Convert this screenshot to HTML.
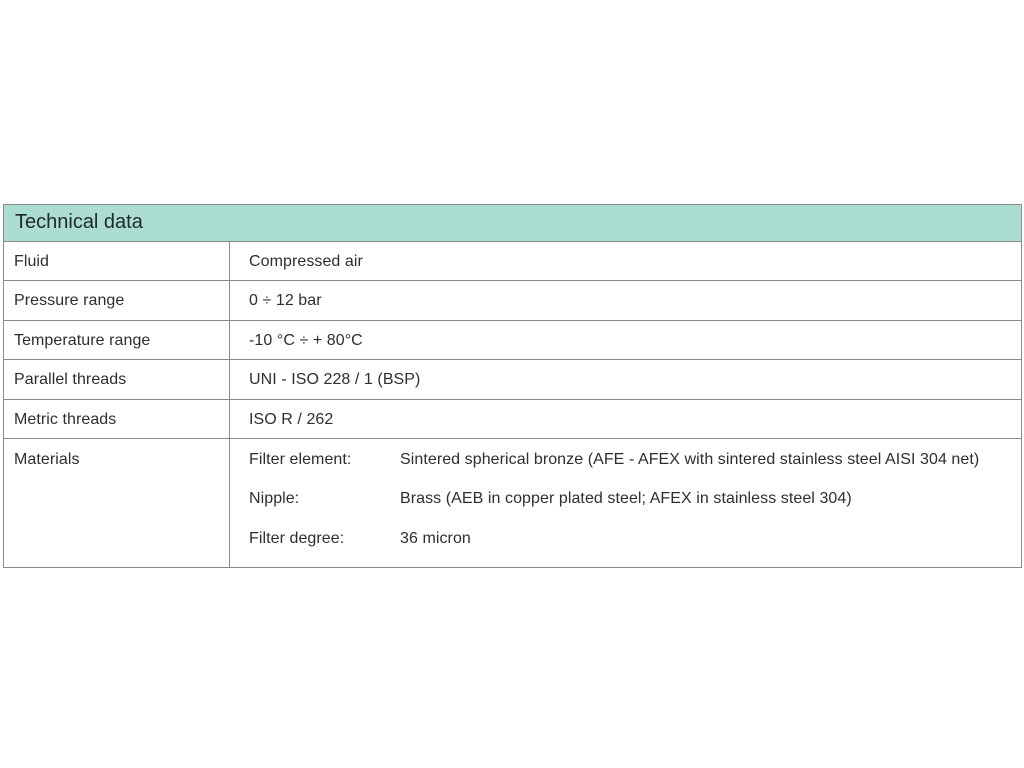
<!DOCTYPE html>
<html><head><style>
body{margin:0;width:1024px;height:768px;background:#fff;font-family:"Liberation Sans",Arial,sans-serif;color:#2e2e2e;position:relative;overflow:hidden}
.box{position:absolute;left:3px;top:204px;width:1017px;height:362px;border:1px solid #8a8a8a}
.hd{position:absolute;left:0;top:0;width:1017px;height:36px;background:#abddd2;border-bottom:1px solid #8a8a8a}
.hd span{position:absolute;left:11px;top:6px;font-size:20px;color:#1f2a28}
.vl{position:absolute;left:225px;top:37px;width:1px;height:325px;background:#8a8a8a}
.hl{position:absolute;left:0;width:1017px;height:1px;background:#8a8a8a}
.t{position:absolute;font-size:16px;white-space:nowrap;letter-spacing:0.07px}
</style></head><body>
<div class="box">
<div class="hd"><span>Technical data</span></div>
<div class="vl"></div>
<div class="hl" style="top:75px"></div>
<div class="hl" style="top:115px"></div>
<div class="hl" style="top:154px"></div>
<div class="hl" style="top:194px"></div>
<div class="hl" style="top:233px"></div>
</div>
<div class="t" style="left:14px;top:253px">Fluid</div>
<div class="t" style="left:249px;top:253px">Compressed air</div>
<div class="t" style="left:14px;top:292px">Pressure range</div>
<div class="t" style="left:249px;top:292px">0 ÷ 12 bar</div>
<div class="t" style="left:14px;top:332px">Temperature range</div>
<div class="t" style="left:249px;top:332px">-10 °C ÷ + 80°C</div>
<div class="t" style="left:14px;top:371px">Parallel threads</div>
<div class="t" style="left:249px;top:371px">UNI - ISO 228 / 1 (BSP)</div>
<div class="t" style="left:14px;top:411px">Metric threads</div>
<div class="t" style="left:249px;top:411px">ISO R / 262</div>
<div class="t" style="left:14px;top:451px">Materials</div>
<div class="t" style="left:249px;top:451px">Filter element:</div>
<div class="t" style="left:400px;top:451px">Sintered spherical bronze (AFE - AFEX with sintered stainless steel AISI 304 net)</div>
<div class="t" style="left:249px;top:490px">Nipple:</div>
<div class="t" style="left:400px;top:490px">Brass (AEB in copper plated steel; AFEX in stainless steel 304)</div>
<div class="t" style="left:249px;top:530px">Filter degree:</div>
<div class="t" style="left:400px;top:530px">36 micron</div>
</body></html>
